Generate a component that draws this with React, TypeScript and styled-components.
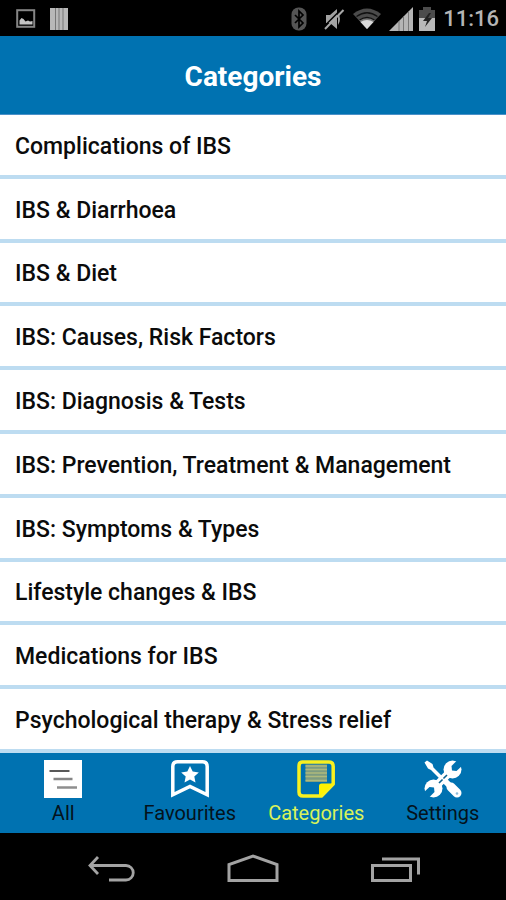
import React, { useState } from "react";
import styled, { createGlobalStyle } from "styled-components";

const colors = {
  blue: "#0072b1",
  line: "#bddcf1",
  active: "#d9f25a",
  ink: "#0b0b0b",
};

const GlobalStyle = createGlobalStyle`
  *, *::before, *::after { box-sizing: border-box; }
  body {
    margin: 0;
    background: #000;
    font-family: Roboto, "Liberation Sans", sans-serif;
  }
  button { font: inherit; color: inherit; border: 0; padding: 0; background: none; cursor: pointer; }
`;

const Screen = styled.div`
  display: flex;
  flex-direction: column;
  min-height: 100vh;
  background: #fff;
`;

const StatusBar = styled.div`
  display: flex;
  align-items: center;
  justify-content: space-between;
  height: 36px;
  padding: 2px 7px 0 16px;
  background: #000;
`;

const StatusGroup = styled.div<{ $gap: number }>`
  display: flex;
  align-items: center;
  gap: ${(p) => p.$gap}px;
  svg { display: block; }
`;

const Clock = styled.time`
  font-size: 22px;
  line-height: 28px;
  font-weight: 500;
  color: #b4b4b4;
`;

const Header = styled.header`
  display: flex;
  align-items: center;
  justify-content: center;
  height: 79px;
  background: ${colors.blue};
  border-bottom: 1px solid #4a90c8;
`;

const Title = styled.h1`
  margin: 0;
  padding-top: 4px;
  font-size: 28px;
  line-height: 34px;
  font-weight: 700;
  color: #fff;
`;

const CategoryList = styled.ul`
  flex: 1;
  display: grid;
  grid-auto-rows: 1fr;
  margin: 0;
  padding: 0;
  list-style: none;
`;

const CategoryItem = styled.li`
  display: flex;
  border-bottom: 4px solid ${colors.line};
`;

const CategoryButton = styled.button`
  flex: 1;
  text-align: left;
  && {
    padding: 17px 15px 13px;
    font-size: 23px;
    line-height: 28px;
    font-weight: 500;
    color: ${colors.ink};
  }
`;

const TabBar = styled.nav`
  display: grid;
  grid-template-columns: repeat(4, 1fr);
  height: 80px;
  background: ${colors.blue};
`;

const TabButton = styled.button<{ $active: boolean }>`
  display: flex;
  flex-direction: column;
  align-items: center;
  justify-content: flex-start;
  svg { display: block; flex: none; }
  && {
    padding-top: 6px;
    font-size: 20px;
    line-height: 28px;
    color: ${(p) => (p.$active ? colors.active : "#04121c")};
  }
`;

const SystemBar = styled.div`
  display: flex;
  justify-content: center;
  gap: 80px;
  height: 67px;
  background: #000;
`;

const SystemButton = styled.button`
  display: grid;
  place-items: center;
  width: 62px;
  && { padding-top: 4px; }
`;

const PictureIcon = () => (
  <svg width="20" height="20" viewBox="0 0 20 20" aria-hidden="true">
    <rect x="1.2" y="1.2" width="17" height="16.6" fill="none" stroke="#858585" strokeWidth="2" />
    <path d="M3.5 15.5v-4l2-2.5 2 1 2 2.5 2.5-1 2 1 2.5-.5v3.5z" fill="#c4c4c4" />
  </svg>
);

const BarsIcon = () => (
  <svg width="18" height="22" viewBox="0 0 18 22" aria-hidden="true">
    <path d="M0 0h18v22H0z" fill="#b8b8b8" />
    <path d="M5.5 0v22M9 0v22M13 0v22" stroke="#777" strokeWidth="1" />
  </svg>
);

const BluetoothIcon = () => (
  <svg width="16" height="24" viewBox="0 0 16 24" aria-hidden="true">
    <rect x="0.5" y="0.5" width="15" height="23" rx="7" fill="#555" />
    <path d="M4 8l8 8-4 4V4l4 4-8 8" fill="none" stroke="#000" strokeWidth="1.7" />
  </svg>
);

const MutedIcon = () => (
  <svg width="22" height="24" viewBox="0 0 22 24" aria-hidden="true">
    <path d="M3 8h4l7-6v20l-7-6H3zM15 6q4 6 0 12z" fill="#a2a2a2" />
    <path d="M1.5 19L18 2.500" stroke="#000" strokeWidth="1.500" />
    <path d="M2 22L20.500 3" stroke="#a8a8a8" strokeWidth="2" />
  </svg>
);

const WifiIcon = () => (
  <svg width="28" height="22" viewBox="0 0 28 22" aria-hidden="true">
    <path d="M0 6Q14-5 28 6L14 21z" fill="#4b4b4b" />
    <path d="M3.5 8.5Q14 1 24.5 8.5" fill="none" stroke="#111" strokeWidth="1.3" />
    <path d="M6 12Q14 6 22 12L14 21z" fill="#777" />
    <path d="M6.5 12Q14 7 21.5 12" fill="none" stroke="#111" strokeWidth="1.3" />
    <path d="M7.500 14Q14 10 20.500 14L14 21z" fill="#dadada" />
  </svg>
);

const SignalIcon = () => (
  <svg width="24" height="24" viewBox="0 0 24 24" aria-hidden="true">
    <path d="M0 24L24 0v24z" fill="#b5b5b5" />
    <path d="M10 14v10M14.5 9.500v14.500M19.5 4.500v19.500" stroke="#777" strokeWidth="1" />
  </svg>
);

const BatteryIcon = () => (
  <svg width="16" height="24" viewBox="0 0 16 24" aria-hidden="true">
    <path d="M0 3h4V0h8v3h4v8H0z" fill="#4c4c4c" />
    <path d="M0 11h16v13H0z" fill="#b9b9b9" />
    <path d="M10 6L4 14h4l-2 6 7-9H9l3-5z" fill="#222" />
  </svg>
);

const AllIcon = () => (
  <svg width="40" height="40" viewBox="0 0 40 40" aria-hidden="true">
    <path d="M1 1h38v38H1z" fill="#fff" />
    <path d="M6.5 12h20" stroke="#585858" strokeWidth="2" />
    <path d="M10.5 20h19" stroke="#858585" strokeWidth="2.5" />
    <path d="M14 28.5h20" stroke="#8e8e8e" strokeWidth="2.5" />
  </svg>
);

const BookmarkIcon = () => (
  <svg width="40" height="40" viewBox="0 0 40 40" aria-hidden="true">
    <path
      d="M2.8 35.8V7.5Q2.8 2.8 7.5 2.8H32.5Q37.2 2.8 37.2 7.5V35.8L20 27.5z"
      fill="none"
      stroke="#fff"
      strokeWidth="3.5"
    />
    <path d="M20 7l2.700 5.600 6.100.8-4.500 4.200 1.200 6-5.500-3-5.500 3 1.200-6-4.500-4.200 6.100-.8z" fill="#fff" />
  </svg>
);

const NoteIcon = () => (
  <svg width="40" height="40" viewBox="0 0 40 40" aria-hidden="true">
    <path
      d="M6.5 3H33Q37.2 3 37.2 7.5V25L25.5 37H7Q3 37 3 33V7Q3 3 6.5 3z"
      fill="none"
      stroke="#f8f020"
      strokeWidth="3.5"
      strokeLinejoin="round"
    />
    <path d="M23 38V27q0-2.500 2.500-2.500H38z" fill="#fff200" />
    <path d="M9.5 5.5h21.5v17.5H9.5z" fill="#7d9b80" />
    <path d="M9.5 7h21.5M9.5 10.5h21.5M9.5 14h21.5M9.5 17.5h21.5M9.5 21.5h21.5" stroke="#aeba7c" strokeWidth="1.3" />
  </svg>
);

const ToolsIcon = () => (
  <svg width="40" height="40" viewBox="0 0 40 40" aria-hidden="true">
    <path d="M12 28L28 12" stroke="#fff" strokeWidth="8" />
    <circle cx="29.500" cy="10.500" r="9" fill="#fff" />
    <circle cx="10.500" cy="29.500" r="9" fill="#fff" />
    <path d="M28.500 7L34.500 1 40 6 33.500 12 29 11.500z" fill={colors.blue} />
    <path d="M11.500 33L5.500 39 0 34 6.500 28 11 28.500z" fill={colors.blue} />
    <path d="M1.500 3.500L4 1.500 9.500 5 10.500 8.500 19 17 16.500 19.500 8 11 5 9.500z" fill="#fff" />
    <path d="M21 21L27 27" stroke="#fff" strokeWidth="6" />
    <path d="M28 28L34 34" stroke="#fff" strokeWidth="9" strokeLinecap="round" />
    <path d="M16 24L24 16" stroke="#0b618f" strokeWidth="1.600" strokeDasharray="5 1.300" />
    <circle cx="34" cy="34.500" r="1.300" fill="#8dbcda" />
  </svg>
);

const BackIcon = () => (
  <svg width="48" height="30" viewBox="0 0 48 30" aria-hidden="true">
    <path d="M11 3L3 11.5l8 8.5M3 11.5h36a7 7 0 0 1 0 14.5H22" fill="none" stroke="#a3a3a3" strokeWidth="2.8" />
  </svg>
);

const HomeIcon = () => (
  <svg width="54" height="30" viewBox="0 0 54 30" aria-hidden="true">
    <path d="M3 26.5V10.5L27 2l24 8.5v16z" fill="none" stroke="#a3a3a3" strokeWidth="3" />
  </svg>
);

const RecentIcon = () => (
  <svg width="50" height="30" viewBox="0 0 50 30" aria-hidden="true">
    <path d="M2.5 11.5h38V26.5h-38zM12 5h36.5v15.5" fill="none" stroke="#a3a3a3" strokeWidth="3" />
  </svg>
);

const categories = [
  "Complications of IBS",
  "IBS & Diarrhoea",
  "IBS & Diet",
  "IBS: Causes, Risk Factors",
  "IBS: Diagnosis & Tests",
  "IBS: Prevention, Treatment & Management",
  "IBS: Symptoms & Types",
  "Lifestyle changes & IBS",
  "Medications for IBS",
  "Psychological therapy & Stress relief",
];

const tabs = [
  { label: "All", Icon: AllIcon },
  { label: "Favourites", Icon: BookmarkIcon },
  { label: "Categories", Icon: NoteIcon },
  { label: "Settings", Icon: ToolsIcon },
];

export default function App() {
  const [current, setCurrent] = useState("Categories");

  return (
    <>
      <GlobalStyle />
      <Screen>
        <StatusBar>
          <StatusGroup $gap={14}>
            <PictureIcon />
            <BarsIcon />
          </StatusGroup>
          <StatusGroup $gap={8}>
            <StatusGroup $gap={16}>
              <BluetoothIcon />
              <StatusGroup $gap={8}>
                <MutedIcon />
                <WifiIcon />
                <StatusGroup $gap={6}>
                  <SignalIcon />
                  <BatteryIcon />
                </StatusGroup>
              </StatusGroup>
            </StatusGroup>
            <Clock>11:16</Clock>
          </StatusGroup>
        </StatusBar>
        <Header>
          <Title>Categories</Title>
        </Header>
        <CategoryList>
          {categories.map((name) => (
            <CategoryItem key={name}>
              <CategoryButton type="button">{name}</CategoryButton>
            </CategoryItem>
          ))}
        </CategoryList>
        <TabBar>
          {tabs.map(({ label, Icon }) => (
            <TabButton
              key={label}
              type="button"
              $active={label === current}
              aria-current={label === current ? "page" : undefined}
              onClick={() => setCurrent(label)}
            >
              <Icon />
              {label}
            </TabButton>
          ))}
        </TabBar>
        <SystemBar>
          <SystemButton type="button" aria-label="Back">
            <BackIcon />
          </SystemButton>
          <SystemButton type="button" aria-label="Home">
            <HomeIcon />
          </SystemButton>
          <SystemButton type="button" aria-label="Recent apps">
            <RecentIcon />
          </SystemButton>
        </SystemBar>
      </Screen>
    </>
  );
}
